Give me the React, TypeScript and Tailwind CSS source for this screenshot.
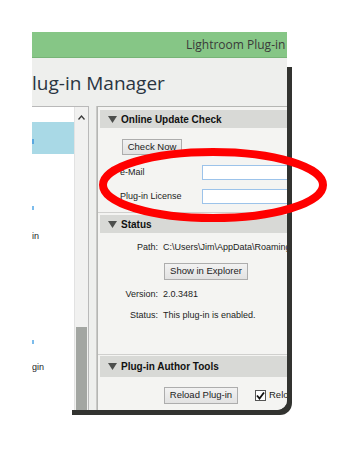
import React from 'react';

const ui = { fontFamily: '"Liberation Sans", Arial, sans-serif' };
const seg = { fontFamily: '"Open Sans", "Noto Sans", sans-serif' };

const Arrow: React.FC = () => (
    <svg width="9" height="7" viewBox="0 0 9 7" className="shrink-0">
        <polygon points="0,0 9,0 4.5,7" fill="#4d4f4d" />
    </svg>
);

const SectionHeader: React.FC<{ title: string; h?: string }> = ({ title, h = 'h-[18px]' }) => (
    <div className={`${h} ml-[2px] bg-[#d8d9d6] flex items-center gap-[4px] pl-[8px] whitespace-nowrap`}>
        <Arrow />
        <span className="text-[10px] font-bold text-[#111]">{title}</span>
    </div>
);

const Btn: React.FC<{ label: string; w: string; h?: string }> = ({ label, w, h = 'h-[17px]' }) => (
    <div className={`${w} ${h} shrink-0 border border-[#adadad] bg-gradient-to-b from-[#f2f2f2] to-[#e2e2e2] flex items-center justify-center text-[9.5px] text-[#1c1c1c] whitespace-nowrap`}>
        {label}
    </div>
);

const InfoRow: React.FC<{ label: string; value: string; mt: string }> = ({ label, value, mt }) => (
    <div className={`${mt} h-[14px] flex items-center whitespace-nowrap text-[9px] text-[#1c1c1c]`}>
        <span className="w-[60px] shrink-0 text-right">{label}</span>
        <span className="ml-[5px] shrink-0">{value}</span>
    </div>
);

const App: React.FC = () => {
    return (
        <div className="relative w-[352px] h-[475px] bg-white pt-[32px] pl-[32px]" style={ui}>
            <div className="relative w-[255px] h-[378px]">
                {/* torn-edge drop shadow */}
                <div className="absolute left-[40px] top-[35px] -right-[5px] -bottom-[5px] bg-[#323330] rounded-br-[12px]" />
                <div className="relative h-full overflow-hidden rounded-br-[10px] flex flex-col">
                    <div className="h-[26px] shrink-0 bg-[#86c686] border-b border-[#77b477] whitespace-nowrap pl-[154px] text-[12px] leading-[25px] text-[#3a3a3a]" style={seg}>
                        Lightroom Plug-in
                    </div>
                    <div className="flex-1 bg-[#eeefed] flex flex-col">
                        <div className="h-[48px] shrink-0 pt-[12px] text-[19px] leading-[26px] text-[#2a3541] whitespace-nowrap" style={seg}>
                            lug-in Manager
                        </div>
                        <div className="flex-1 flex">
                            {/* plug-in list, cut off on the left */}
                            <div className="w-[57px] shrink-0 flex border-t border-r border-[#b9b9b9]">
                                <div className="w-[42px] bg-white flex flex-col text-[9px] text-[#1c1c1c]">
                                    <div className="h-[15px]" />
                                    <div className="h-[32px] bg-[#a9d9e6] flex items-center">
                                        <span className="w-[2px] h-[5px] bg-[#5aa8e0] mt-[6px]" />
                                    </div>
                                    <div className="h-[58px] flex items-end">
                                        <span className="w-[2px] h-[4px] bg-[#7cbcec] mb-[2px]" />
                                    </div>
                                    <div className="mt-[18px] leading-[12px]">in</div>
                                    <div className="h-[104px] flex items-end">
                                        <span className="w-[2px] h-[4px] bg-[#7cbcec] mb-[2px]" />
                                    </div>
                                    <div className="mt-[15px] leading-[12px]">gin</div>
                                </div>
                                <div className="w-[14px] bg-[#f1f1f0] border-l border-[#e2e2e2] flex flex-col items-center">
                                    <svg width="7" height="5" viewBox="0 0 7 5" className="mt-[8px]">
                                        <polyline points="0.5,4.5 3.5,1 6.5,4.5" fill="none" stroke="#3a3a3a" strokeWidth="1.3" />
                                    </svg>
                                    <div className="flex-1" />
                                    <div className="w-[11px] h-[83px] bg-[#a3a6a2]" />
                                </div>
                            </div>
                            <div className="w-[8px] shrink-0 border-r border-[#c9c9c7]" />
                            {/* settings panel */}
                            <div className="flex-1 min-w-0 bg-[#f4f4f2] border-t border-l border-[#b5b6b3] pt-[3px] flex flex-col">
                                <SectionHeader title="Online Update Check" />
                                <div className="mt-[11px] ml-[24px]">
                                    <Btn label="Check Now" w="w-[60px]" h="h-[16px]" />
                                </div>
                                <div className="mt-[10px] h-[15px] flex items-center whitespace-nowrap text-[9px] text-[#1c1c1c]">
                                    <span className="w-[104px] shrink-0 pl-[22px]">e-Mail</span>
                                    <div className="w-[100px] h-[15px] shrink-0 bg-white border border-[#9cc3ea]" />
                                </div>
                                <div className="mt-[9px] h-[15px] flex items-center whitespace-nowrap text-[9px] text-[#1c1c1c]">
                                    <span className="w-[104px] shrink-0 pl-[22px]">Plug-in License</span>
                                    <div className="w-[100px] h-[15px] shrink-0 bg-white border border-[#9cc3ea]" />
                                </div>
                                <div className="mt-[8px] border-t border-[#d0d0ce] pt-[2px]">
                                    <SectionHeader title="Status" />
                                </div>
                                <InfoRow mt="mt-[8px]" label="Path:" value="C:\Users\Jim\AppData\Roaming" />
                                <div className="mt-[8px] ml-[66px]">
                                    <Btn label="Show in Explorer" w="w-[84px]" />
                                </div>
                                <InfoRow mt="mt-[8px]" label="Version:" value="2.0.3481" />
                                <InfoRow mt="mt-[7px]" label="Status:" value="This plug-in is enabled." />
                                <div className="mt-[31px] border-t border-[#d0d0ce] pt-[1px]">
                                    <SectionHeader title="Plug-in Author Tools" h="h-[21px]" />
                                </div>
                                <div className="mt-[10px] ml-[66px] flex items-center whitespace-nowrap">
                                    <Btn label="Reload Plug-in" w="w-[74px]" />
                                    <div className="ml-[17px] w-[11px] h-[11px] shrink-0 bg-white border border-[#555] flex items-center justify-center">
                                        <svg width="9" height="9" viewBox="0 0 9 9">
                                            <polyline points="1,4.5 3.5,7.5 8,1.5" fill="none" stroke="#111" strokeWidth="1.8" />
                                        </svg>
                                    </div>
                                    <span className="ml-[3px] text-[9.5px] text-[#1c1c1c]">Reload</span>
                                </div>
                            </div>
                        </div>
                    </div>
                </div>
            </div>
            {/* red highlight ellipse drawn over the screenshot */}
            <svg className="absolute left-[95px] top-[144px]" width="236" height="82" viewBox="0 0 236 82">
                <ellipse cx="118" cy="41" rx="110" ry="33" fill="none" stroke="#ff0000" strokeWidth="8" />
            </svg>
        </div>
    );
};

export default App;
